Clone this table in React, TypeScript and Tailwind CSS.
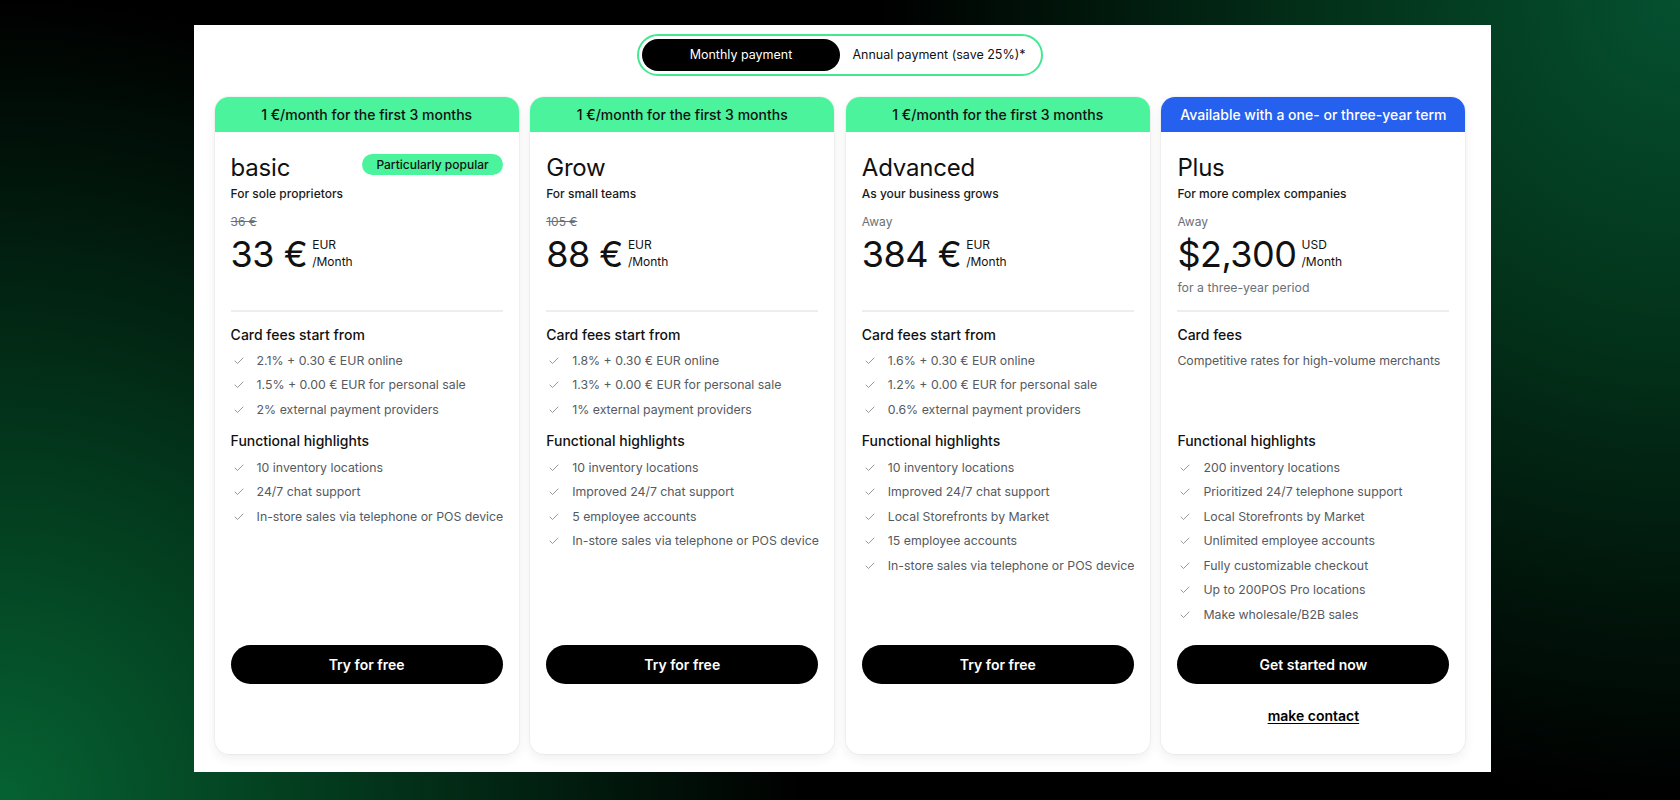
import React from "react";

type Plan = {
  banner: string;
  bannerBlue?: boolean;
  name: string;
  badge?: string;
  subtitle: string;
  pre: string;
  preStrike?: boolean;
  price: string;
  currency: string;
  note?: string;
  feesTitle: string;
  fees: string[];
  feesText?: string;
  features: string[];
  cta: string;
  contact?: boolean;
};

const plans: Plan[] = [
  {
    banner: "1 €/month for the first 3 months",
    name: "basic",
    badge: "Particularly popular",
    subtitle: "For sole proprietors",
    pre: "36 €",
    preStrike: true,
    price: "33 €",
    currency: "EUR",
    feesTitle: "Card fees start from",
    fees: ["2.1% + 0.30 € EUR online", "1.5% + 0.00 € EUR for personal sale", "2% external payment providers"],
    features: ["10 inventory locations", "24/7 chat support", "In-store sales via telephone or POS device"],
    cta: "Try for free",
  },
  {
    banner: "1 €/month for the first 3 months",
    name: "Grow",
    subtitle: "For small teams",
    pre: "105 €",
    preStrike: true,
    price: "88 €",
    currency: "EUR",
    feesTitle: "Card fees start from",
    fees: ["1.8% + 0.30 € EUR online", "1.3% + 0.00 € EUR for personal sale", "1% external payment providers"],
    features: [
      "10 inventory locations",
      "Improved 24/7 chat support",
      "5 employee accounts",
      "In-store sales via telephone or POS device",
    ],
    cta: "Try for free",
  },
  {
    banner: "1 €/month for the first 3 months",
    name: "Advanced",
    subtitle: "As your business grows",
    pre: "Away",
    price: "384 €",
    currency: "EUR",
    feesTitle: "Card fees start from",
    fees: ["1.6% + 0.30 € EUR online", "1.2% + 0.00 € EUR for personal sale", "0.6% external payment providers"],
    features: [
      "10 inventory locations",
      "Improved 24/7 chat support",
      "Local Storefronts by Market",
      "15 employee accounts",
      "In-store sales via telephone or POS device",
    ],
    cta: "Try for free",
  },
  {
    banner: "Available with a one- or three-year term",
    bannerBlue: true,
    name: "Plus",
    subtitle: "For more complex companies",
    pre: "Away",
    price: "$2,300",
    currency: "USD",
    note: "for a three-year period",
    feesTitle: "Card fees",
    fees: [],
    feesText: "Competitive rates for high-volume merchants",
    features: [
      "200 inventory locations",
      "Prioritized 24/7 telephone support",
      "Local Storefronts by Market",
      "Unlimited employee accounts",
      "Fully customizable checkout",
      "Up to 200POS Pro locations",
      "Make wholesale/B2B sales",
    ],
    cta: "Get started now",
    contact: true,
  },
];

function Check() {
  return (
    <svg width="12" height="12" viewBox="0 0 24 24" fill="none" stroke="#7b8088" strokeWidth="1.6" strokeLinecap="round" strokeLinejoin="round" className="shrink-0">
      <path d="M20 6 9 17l-5-5" />
    </svg>
  );
}

function Item({ text }: { text: string }) {
  return (
    <li className="flex items-center h-[24.5px] pl-[2px] gap-[12px] text-[12.3px] text-[#555a61] whitespace-nowrap">
      <Check />
      <span>{text}</span>
    </li>
  );
}

function Card({ p }: { p: Plan }) {
  return (
    <div className="w-[304px] h-[657px] flex flex-col bg-white rounded-[14px] overflow-hidden shadow-[0_0_0_1px_rgba(0,0,0,0.035),0_4px_12px_rgba(0,0,0,0.07)]">
      <div
        className={
          p.bannerBlue
            ? "h-[35px] flex items-center justify-center text-[14px] font-medium text-white bg-[#2660ee]"
            : "h-[35px] flex items-center justify-center text-[14px] font-medium text-[#111] bg-[#4af39c]"
        }
      >
        {p.banner}
      </div>
      <div className="flex-1 flex flex-col px-4">
        <div className="h-[178px] pt-[20px] flex flex-col">
          <div className="flex items-start justify-between">
            <div className="text-[24px] leading-[32px] text-[#111] tracking-[-0.2px]">{p.name}</div>
            {p.badge && (
              <div className="mt-[2px] h-[21px] px-[14px] rounded-full bg-[#4af39c] text-[12px] font-medium text-[#111] flex items-center">
                {p.badge}
              </div>
            )}
          </div>
          <div className="mt-[1px] text-[12px] leading-[18px] font-medium text-[#1a1a1a]">{p.subtitle}</div>
          <div
            className={
              p.preStrike
                ? "mt-[10px] text-[12px] leading-[18px] text-[#6b7078] line-through"
                : "mt-[10px] text-[12px] leading-[18px] text-[#6b7078]"
            }
          >
            {p.pre}
          </div>
          <div className="mt-[3px] flex items-end">
            <div className="text-[36px] leading-[40px] text-[#111] tracking-[-0.5px]">{p.price}</div>
            <div className="ml-[5px] pb-[4px] text-[12px] leading-[17px] text-[#111]">
              <div>{p.currency}</div>
              <div>/Month</div>
            </div>
          </div>
          {p.note && <div className="mt-[5px] text-[12.3px] leading-[18px] text-[#6b7078]">{p.note}</div>}
        </div>
        <div className="h-[2px] bg-[#eceef1]" />
        <div className="mt-[13px] text-[14px] leading-[20px] font-medium text-[#111]">{p.feesTitle}</div>
        <ul className="mt-[3.5px] h-[73.5px]">
          {p.feesText ? (
            <li className="h-[24.5px] flex items-center text-[12.3px] text-[#555a61]">{p.feesText}</li>
          ) : (
            p.fees.map((f) => <Item key={f} text={f} />)
          )}
        </ul>
        <div className="mt-[8.5px] text-[14px] leading-[20px] font-medium text-[#111]">Functional highlights</div>
        <ul className="mt-[5px]">
          {p.features.map((f) => (
            <Item key={f} text={f} />
          ))}
        </ul>
        <button className="mt-auto h-[39px] w-full rounded-full bg-black text-white text-[14px] font-semibold">
          {p.cta}
        </button>
      </div>
      <div className="h-[70px] pt-[19px] text-center">
        {p.contact && (
          <span className="text-[14px] leading-[20px] font-semibold text-black underline underline-offset-2">make contact</span>
        )}
      </div>
    </div>
  );
}

export default function App() {
  return (
    <div
      className="w-[1680px] h-[800px] overflow-hidden bg-black pt-[25px] pl-[194px] bg-[radial-gradient(circle_800px_at_0%_100%,#066232_0%,#033d1f_38%,rgba(0,0,0,0)_100%),radial-gradient(circle_800px_at_100%_0%,#055030_0%,#03361c_38%,rgba(0,0,0,0)_100%)]"
      style={{ fontFamily: "Inter, 'Noto Sans', sans-serif" }}
    >
      <div className="w-[1297px] h-[747px] bg-white pl-[21px] pr-[26px] flex flex-col items-center">
        <div className="mt-[9px] h-[42px] rounded-full border-2 border-[#45e892] p-[3px] flex">
          <button className="w-[198px] h-[32px] rounded-full bg-black text-white text-[12.5px]">Monthly payment</button>
          <button className="w-[198px] h-[32px] rounded-full text-[#111] text-[12.5px]">Annual payment (save 25%)*</button>
        </div>
        <div className="mt-[21px] flex gap-[11.6px]">
          {plans.map((p) => (
            <Card key={p.name} p={p} />
          ))}
        </div>
      </div>
    </div>
  );
}
